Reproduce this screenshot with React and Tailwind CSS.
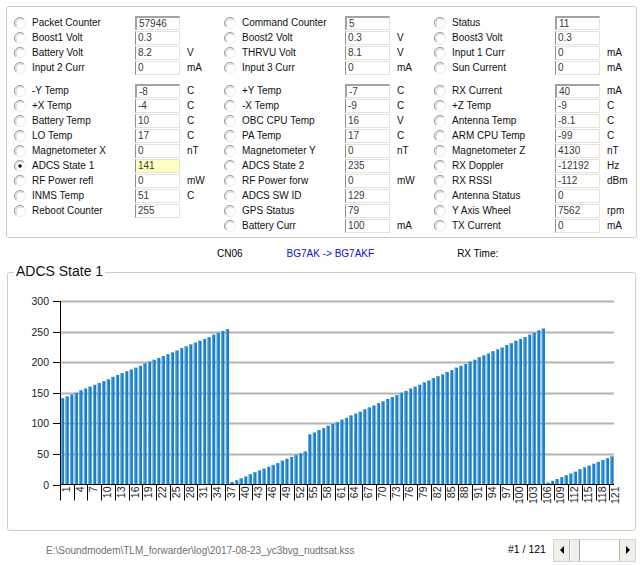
import React from 'react';

const COLUMNS = [
  {
    top: [
      { label: 'Packet Counter', value: '57946' },
      { label: 'Boost1 Volt', value: '0.3' },
      { label: 'Battery Volt', value: '8.2', unit: 'V' },
      { label: 'Input 2 Curr', value: '0', unit: 'mA' },
    ],
    bottom: [
      { label: '-Y Temp', value: '-8', unit: 'C' },
      { label: '+X Temp', value: '-4', unit: 'C' },
      { label: 'Battery Temp', value: '10', unit: 'C' },
      { label: 'LO Temp', value: '17', unit: 'C' },
      { label: 'Magnetometer X', value: '0', unit: 'nT' },
      { label: 'ADCS State 1', value: '141', checked: true },
      { label: 'RF Power refl', value: '0', unit: 'mW' },
      { label: 'INMS Temp', value: '51', unit: 'C' },
      { label: 'Reboot Counter', value: '255' },
    ],
  },
  {
    top: [
      { label: 'Command Counter', value: '5' },
      { label: 'Boost2 Volt', value: '0.3', unit: 'V' },
      { label: 'THRVU Volt', value: '8.1', unit: 'V' },
      { label: 'Input 3 Curr', value: '0', unit: 'mA' },
    ],
    bottom: [
      { label: '+Y Temp', value: '-7', unit: 'C' },
      { label: '-X Temp', value: '-9', unit: 'C' },
      { label: 'OBC CPU Temp', value: '16', unit: 'V' },
      { label: 'PA Temp', value: '17', unit: 'C' },
      { label: 'Magnetometer Y', value: '0', unit: 'nT' },
      { label: 'ADCS State 2', value: '235' },
      { label: 'RF Power forw', value: '0', unit: 'mW' },
      { label: 'ADCS SW ID', value: '129' },
      { label: 'GPS Status', value: '79' },
      { label: 'Battery Curr', value: '100', unit: 'mA' },
    ],
  },
  {
    top: [
      { label: 'Status', value: '11' },
      { label: 'Boost3 Volt', value: '0.3' },
      { label: 'Input 1 Curr', value: '0', unit: 'mA' },
      { label: 'Sun Current', value: '0', unit: 'mA' },
    ],
    bottom: [
      { label: 'RX Current', value: '40', unit: 'mA' },
      { label: '+Z Temp', value: '-9', unit: 'C' },
      { label: 'Antenna Temp', value: '-8.1', unit: 'C' },
      { label: 'ARM CPU Temp', value: '-99', unit: 'C' },
      { label: 'Magnetometer Z', value: '4130', unit: 'nT' },
      { label: 'RX Doppler', value: '-12192', unit: 'Hz' },
      { label: 'RX RSSI', value: '-112', unit: 'dBm' },
      { label: 'Antenna Status', value: '0' },
      { label: 'Y Axis Wheel', value: '7562', unit: 'rpm' },
      { label: 'TX Current', value: '0', unit: 'mA' },
    ],
  },
];

function Radio({ checked }) {
  return (
    <svg width="12" height="12" viewBox="0 0 12 12" className="shrink-0">
      <circle cx="6" cy="6" r="5.5" fill="#fff" stroke="#ecebe6" />
      <path d="M2.1 9.9 A5.5 5.5 0 0 1 9.9 2.1" fill="none" stroke="#9a9a9a" />
      <path d="M2.9 9.1 A4.4 4.4 0 0 1 9.1 2.9" fill="none" stroke="#d2d2d2" />
      {checked && <circle cx="6" cy="6" r="1.8" fill="#111" />}
    </svg>
  );
}

function Row({ label, value, unit, checked, first }) {
  const box = first
    ? 'border-t-2 border-l-2 border-r border-b border-t-[#a2a2a2] border-l-[#a2a2a2] border-r-[#e4e2da] border-b-[#e4e2da]'
    : 'border border-[#e4e2da] border-l-[#8e8e8e]';
  return (
    <div className="flex items-center h-[15px]">
      <Radio checked={checked} />
      <span className="ml-[6px] w-[103px] text-[#111] whitespace-nowrap">{label}</span>
      <div
        className={`w-[45px] h-[14px] pl-[2px] leading-[12px] text-[#3a3a3a] ${box} ${
          checked ? 'bg-[#ffffc4]' : 'bg-white'
        }`}
      >
        {value}
      </div>
      <span className="ml-[7px] text-[#111]">{unit}</span>
    </div>
  );
}

// ADCS State 1 history, wraps at 255
const VALUES = Array.from({ length: 121 }, (_, k) => {
  const i = k + 1;
  if (i <= 37) return Math.round(141 + (i - 1) * (113 / 36));
  if (i <= 54) return Math.round(4 + (i - 38) * 3.14);
  if (i <= 106) return Math.round(82 + (i - 55) * (173 / 51));
  return Math.round(3 + (i - 107) * (43 / 14));
});

function Chart() {
  const X0 = 60;
  const X1 = 614;
  const Y0 = 484.5;
  const s = (484.5 - 301) / 300;
  const w = (X1 - X0) / VALUES.length;
  const grid = [50, 100, 150, 200, 250, 300];
  return (
    <svg width="627" height="257" className="block">
      <g transform="translate(-8,-273)" fontFamily="'Liberation Sans', Arial, sans-serif" fontSize="10.5" fill="#222">
        {grid.map((v) => {
          const y = Math.round(Y0 - v * s) + 0.5;
          return <line key={v} x1={X0} x2={X1} y1={y} y2={y} stroke="#b4b4b4" strokeWidth="2" />;
        })}
        {VALUES.map((v, k) => {
          const x = X0 + k * w + 1;
          const h = v * s;
          return (
            <g key={k}>
              <rect x={x} y={Y0 - h} width="3.2" height={h} fill="#1a7ec4" />
              <rect x={x} y={Y0 - h} width="1" height={h} fill="#5fb0e4" />
            </g>
          );
        })}
        {[0, ...grid].map((v) => {
          const y = Math.round(Y0 - v * s) + 0.5;
          return (
            <g key={v}>
              <line x1="53" x2={X0} y1={y} y2={y} stroke="#000" />
              <text x="49" y={y + 3.5} textAnchor="end">
                {v}
              </text>
            </g>
          );
        })}
        <line x1="60.5" x2="60.5" y1={Math.round(Y0 - 300 * s)} y2={Y0} stroke="#000" />
        <line x1={X0} x2={X1} y1={Y0} y2={Y0} stroke="#000" />
        {Array.from({ length: 41 }, (_, k) => {
          const x = Math.round(X0 + 3 * k * w) + 0.5;
          return (
            <g key={k}>
              <line x1={x} x2={x} y1={Y0} y2={Y0 + 16} stroke="#000" />
              <text transform={`translate(${x + 9.5},${Y0 + 2}) rotate(-90)`} textAnchor="end">
                {1 + 3 * k}
              </text>
            </g>
          );
        })}
      </g>
    </svg>
  );
}

export default function App() {
  return (
    <div className="w-[640px] h-[565px] bg-white overflow-hidden font-['Liberation_Sans',Arial,sans-serif] text-[10px] text-black">
      <div className="ml-[6px] mt-[6px] w-[631px] h-[232px] border border-[#d0d0bf] rounded-[3px] pl-[7px] pt-[8px] grid grid-cols-[210px_210px_210px]">
        {COLUMNS.map((col, c) => (
          <div key={c}>
            {col.top.map((r, i) => (
              <Row key={r.label} {...r} first={i === 0} />
            ))}
            <div className="mt-[8px]">
              {col.bottom.map((r, i) => (
                <Row key={r.label} {...r} first={i === 0} />
              ))}
            </div>
          </div>
        ))}
      </div>

      <div className="mt-[7px] h-[16px] flex items-center">
        <span className="ml-[217px]">CN06</span>
        <span className="ml-[44px] text-[#1010d0]">BG7AK -&gt; BG7AKF</span>
        <span className="ml-[83px]">RX Time:</span>
      </div>

      <div className="relative ml-[7px] mt-[11px] w-[629px] h-[259px] border border-[#d0d0bf] rounded-[3px]">
        <span className="absolute -top-[10px] left-[6px] px-[2px] bg-white text-[14px] leading-[16px] text-[#111]">
          ADCS State 1
        </span>
        <Chart />
      </div>

      <div className="mt-[7px] h-[24px] flex items-center">
        <span className="ml-[46px] w-[462px] text-[#707070]">
          E:\Soundmodem\TLM_forwarder\log\2017-08-23_yc3bvg_nudtsat.kss
        </span>
        <span className="w-[45px] text-[10.5px]">#1 / 121</span>
        <div className="flex h-[23px] w-[83px] bg-[#f4f3ee] border border-[#d8d6cc]">
          <div className="w-[16px] flex items-center justify-center bg-[#f0efe9] border-r border-[#b8b6ae]">
            <span className="w-0 h-0 border-y-[4px] border-y-transparent border-r-[4px] border-r-black" />
          </div>
          <div className="w-[10px] bg-[#f0efe9] border-r border-[#a0a0a0] border-l border-l-white" />
          <div className="flex-1 bg-white" />
          <div className="w-[16px] flex items-center justify-center bg-[#f0efe9] border-l border-[#b8b6ae]">
            <span className="w-0 h-0 border-y-[4px] border-y-transparent border-l-[4px] border-l-black" />
          </div>
        </div>
      </div>
    </div>
  );
}
